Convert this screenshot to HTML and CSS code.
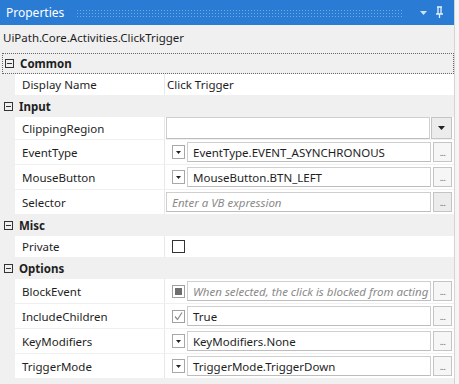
FILE: index.html
```html
<!DOCTYPE html>
<html>
<head>
<meta charset="utf-8">
<link rel="stylesheet" href="styles.css">
</head>
<body>
<div class="panel">
  <div class="titlebar">
    <span class="title">Properties</span>
    <div class="dots"></div>
    <svg class="tb-icon" width="9" height="6" viewBox="0 0 9 6"><path d="M1 1 L8 1 L4.5 5 Z" fill="#cfe3f7"/></svg>
    <svg class="tb-icon pin" width="9" height="13" viewBox="0 0 9 13"><path d="M2 1 H7 M3 1 V8 M6 1 V8 M1 8 H8 M4.5 8 V12" stroke="#e6f0fb" stroke-width="1.3" fill="none"/></svg>
  </div>
  <div class="typename">UiPath.Core.Activities.ClickTrigger</div>

  <div class="grid">
    <div class="cat focused"><span class="minus"></span><span class="catname">Common</span></div>
    <div class="row r22"><div class="gut"></div><div class="name">Display Name</div><div class="val"><span class="plain">Click Trigger</span></div></div>

    <div class="cat"><span class="minus"></span><span class="catname">Input</span></div>
    <div class="row r23"><div class="gut"></div><div class="name">ClippingRegion</div><div class="val"><div class="combo"><div class="box"></div><div class="dd"><svg width="7" height="4" viewBox="0 0 7 4"><path d="M0 0 H7 L3.5 4 Z" fill="#222"/></svg></div></div></div></div>
    <div class="row"><div class="gut"></div><div class="name">EventType</div><div class="val"><span class="mini"><svg width="5" height="3" viewBox="0 0 5 3"><path d="M0 0 H5 L2.5 3 Z" fill="#222"/></svg></span><div class="box">EventType.EVENT_ASYNCHRONOUS</div><span class="dots3">...</span></div></div>
    <div class="row"><div class="gut"></div><div class="name">MouseButton</div><div class="val"><span class="mini"><svg width="5" height="3" viewBox="0 0 5 3"><path d="M0 0 H5 L2.5 3 Z" fill="#222"/></svg></span><div class="box">MouseButton.BTN_LEFT</div><span class="dots3">...</span></div></div>
    <div class="row"><div class="gut"></div><div class="name">Selector</div><div class="val"><div class="box wide ph">Enter a VB expression</div><span class="dots3 grey">...</span></div></div>

    <div class="cat"><span class="minus"></span><span class="catname">Misc</span></div>
    <div class="row r22"><div class="gut"></div><div class="name">Private</div><div class="val"><span class="chk"></span></div></div>

    <div class="cat"><span class="minus"></span><span class="catname">Options</span></div>
    <div class="row"><div class="gut"></div><div class="name">BlockEvent</div><div class="val"><span class="chk soft"><span class="fill"></span></span><div class="box ph">When selected, the click is blocked from acting</div><span class="dots3">...</span></div></div>
    <div class="row"><div class="gut"></div><div class="name">IncludeChildren</div><div class="val"><span class="chk soft"><svg width="11" height="11" viewBox="0 0 11 11"><path d="M2 5.5 L4.5 8.5 L9 1.5" stroke="#8a8a8a" stroke-width="1.2" fill="none"/></svg></span><div class="box">True</div><span class="dots3">...</span></div></div>
    <div class="row"><div class="gut"></div><div class="name">KeyModifiers</div><div class="val"><span class="mini"><svg width="5" height="3" viewBox="0 0 5 3"><path d="M0 0 H5 L2.5 3 Z" fill="#222"/></svg></span><div class="box">KeyModifiers.None</div><span class="dots3">...</span></div></div>
    <div class="row"><div class="gut"></div><div class="name">TriggerMode</div><div class="val"><span class="mini"><svg width="5" height="3" viewBox="0 0 5 3"><path d="M0 0 H5 L2.5 3 Z" fill="#222"/></svg></span><div class="box">TriggerMode.TriggerDown</div><span class="dots3">...</span></div></div>
  </div>
</div>
</body>
</html>
```
FILE: styles.css
```css
html, body {
  margin: 0;
  padding: 0;
  background: #f5f5f5;
}
body {
  width: 459px;
  height: 384px;
  overflow: hidden;
  font-family: "Noto Sans", "Open Sans", sans-serif;
  font-size: 11.5px;
  color: #1e1e1e;
}
.panel {
  width: 454px;
  height: 384px;
  background: #f0f0f0;
  border-right: 1px solid #d4d4d4;
}
.titlebar {
  height: 25px;
  background: #2a7bd4;
  display: flex;
  align-items: center;
  padding: 0 10px 0 6px;
  color: #fff;
  font-size: 12px;
}
.title {
  margin-right: 12px;
}
.dots {
  flex: 1;
  height: 8px;
  margin-right: 8px;
  background-image: radial-gradient(circle, rgba(255,255,255,0.35) 0.6px, transparent 0.9px);
  background-size: 3px 3px;
}
.tb-icon {
  margin-left: 7px;
}
.typename {
  height: 28px;
  line-height: 26px;
  padding-left: 3px;
  font-size: 11.5px;
}
.grid {
  display: flex;
  flex-direction: column;
}
.cat {
  height: 21px;
  display: flex;
  align-items: center;
  box-sizing: border-box;
  padding-left: 4px;
  font-weight: bold;
  font-size: 11.5px;
}
.cat.focused {
  border: 1px dotted #666;
  margin-left: 2px;
  padding-left: 2px;
}
.minus {
  width: 9px;
  height: 9px;
  box-sizing: border-box;
  border: 1px solid #333;
  position: relative;
  margin-right: 6px;
}
.minus::after {
  content: "";
  position: absolute;
  left: 1px;
  right: 1px;
  top: 3px;
  height: 1px;
  background: #333;
}
.row {
  height: 24px;
  margin-bottom: 1px;
  display: flex;
}
.row.r22 { height: 21px; }
.row.r23 { height: 22px; }
.gut {
  width: 15px;
  flex: none;
}
.name {
  width: 150px;
  flex: none;
  background: #fff;
  padding-left: 7px;
  box-sizing: border-box;
  display: flex;
  align-items: center;
  border-right: 1px solid #e8e8e8;
}
.val {
  flex: 1;
  background: #fff;
  display: flex;
  align-items: center;
  padding: 0 2px 0 1px;
  min-width: 0;
}
.plain {
  padding-left: 1px;
}
.combo {
  flex: 1;
  display: flex;
  height: 22px;
  align-self: flex-start;
}
.combo .box {
  height: 22px;
}
.dd {
  width: 19px;
  height: 20px;
  margin-left: 1px;
  border: 1px solid #c4c4c4;
  background: #ececec;
  display: flex;
  align-items: center;
  justify-content: center;
}
.mini {
  width: 11px;
  height: 12px;
  border: 1px solid #a8a8a8;
  margin: 0 2px 0 6px;
  display: flex;
  align-items: center;
  justify-content: center;
  flex: none;
}
.box {
  flex: 1;
  min-width: 0;
  height: 20px;
  box-sizing: border-box;
  border: 1px solid #cfcfcf;
  border-bottom-color: #bdbdbd;
  display: flex;
  align-items: center;
  padding-left: 5px;
  white-space: nowrap;
  overflow: hidden;
  font-size: 11.5px;
}
.box.ph {
  font-style: italic;
  color: #8a8a8a;
}
.dots3 {
  width: 17px;
  height: 18px;
  margin-left: 2px;
  border: 1px solid #c4c4c4;
  background: #f6f6f6;
  flex: none;
  font-size: 9px;
  color: #666;
  text-align: center;
  line-height: 20px;
  letter-spacing: -0.5px;
}
.dots3.grey {
  background: #ececec;
}
.chk {
  width: 11px;
  height: 11px;
  border: 1px solid #333;
  margin-left: 6px;
  display: flex;
  align-items: center;
  justify-content: center;
  flex: none;
}
.chk.soft {
  border-color: #a0a0a0;
  margin-right: 2px;
}
.fill {
  width: 7px;
  height: 7px;
  background: #6e6e6e;
}
```
